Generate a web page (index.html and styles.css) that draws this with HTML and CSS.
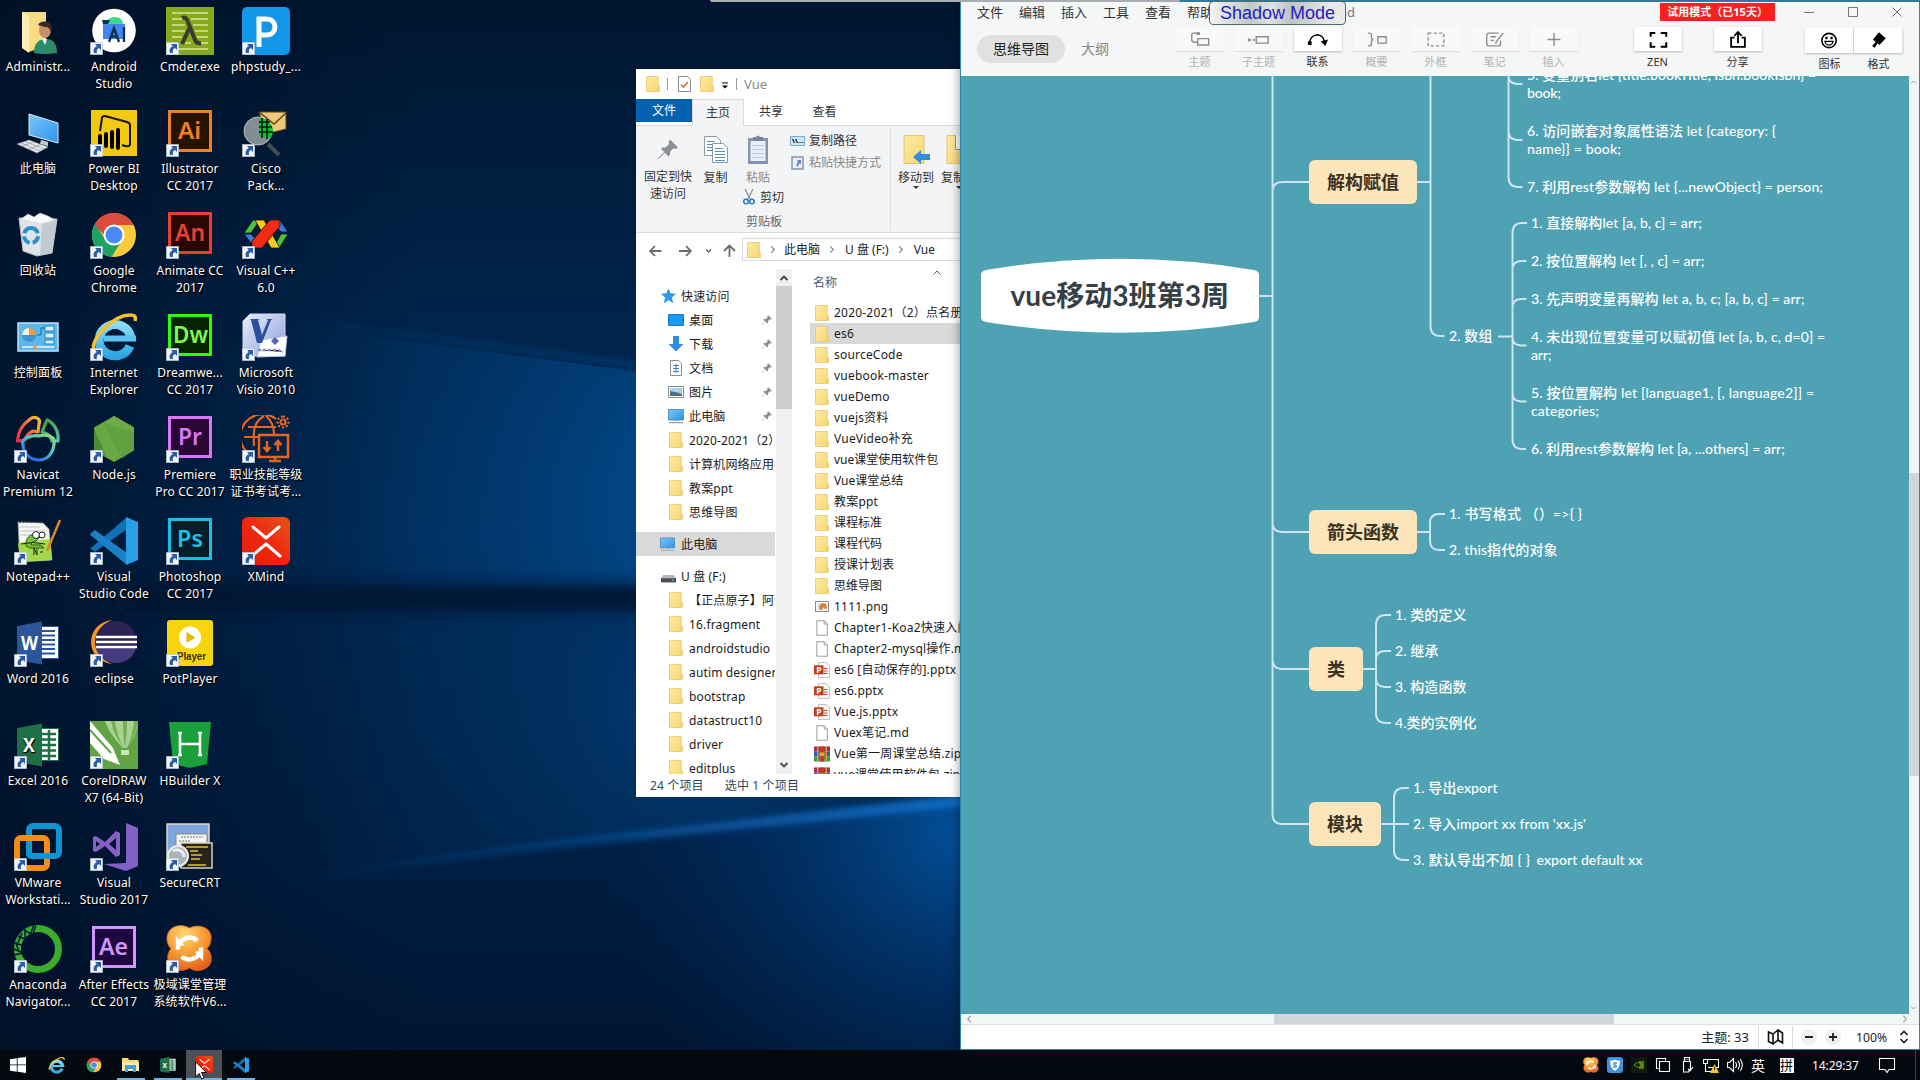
FILE: index.html
```
<!DOCTYPE html>
<html lang="zh-CN">
<head>
<meta charset="utf-8">
<title>桌面</title>
<link rel="stylesheet" href="styles.css">
</head>
<body>
<svg class="defs" width="0" height="0">
  <defs>
    <linearGradient id="gFolder" x1="0" y1="0" x2="1" y2="1"><stop offset="0" stop-color="#fdeaa0"/><stop offset="1" stop-color="#f8d775"/></linearGradient>
    <linearGradient id="gScreen" x1="0" y1="0" x2="1" y2="1"><stop offset="0" stop-color="#7cc8fb"/><stop offset="1" stop-color="#2a93e8"/></linearGradient>
    <linearGradient id="gXm" x1="1" y1="0" x2="0" y2="1"><stop offset="0" stop-color="#e0571b"/><stop offset=".5" stop-color="#f0270f"/><stop offset="1" stop-color="#e51d05"/></linearGradient>
    <radialGradient id="gOr" cx=".4" cy=".2" r=".9"><stop offset="0" stop-color="#ffd978"/><stop offset=".5" stop-color="#f79a32"/><stop offset="1" stop-color="#e2561a"/></radialGradient>
    <linearGradient id="gIe" x1="0" y1="0" x2="0" y2="1"><stop offset="0" stop-color="#8ddcf8"/><stop offset="1" stop-color="#29a7e6"/></linearGradient>
    <linearGradient id="gNavR" gradientUnits="userSpaceOnUse" x1="3" y1="24" x2="26" y2="6"><stop offset="0" stop-color="#ee2d4f"/><stop offset=".5" stop-color="#f4643a"/><stop offset="1" stop-color="#fbc02d"/></linearGradient>
    <linearGradient id="gNavG" gradientUnits="userSpaceOnUse" x1="32" y1="4" x2="44" y2="26"><stop offset="0" stop-color="#4c9a3e"/><stop offset="1" stop-color="#4cc4b4"/></linearGradient>
    <linearGradient id="gNav" gradientUnits="userSpaceOnUse" x1="38" y1="20" x2="22" y2="45"><stop offset="0" stop-color="#9fd36a"/><stop offset=".5" stop-color="#4fc3d0"/><stop offset="1" stop-color="#2f6fe0"/></linearGradient>
    <linearGradient id="gVisio" x1="0" y1="0" x2="1" y2="1"><stop offset="0" stop-color="#e9eefb"/><stop offset="1" stop-color="#8a9fd8"/></linearGradient>
  </defs>
  <symbol id="lnk" viewBox="0 0 13 13"><path fill="#f2f5fa" stroke="#aeb8c8" stroke-width=".6" d="M.3.3h12.4v12.4H.3z"/><path fill="#2b5ca8" d="M5 2h6v6L9 6.100C7 7 6.500 8.500 7 11H4C2.800 8 4 5.500 6.800 4z"/></symbol>
  <symbol id="folder" viewBox="0 0 14 16"><path fill="url(#gFolder)" stroke="#e6c25c" stroke-width=".7" d="M.5.5h11.800v9l1 1v5H.5z"/><path fill="#f3cf68" d="M11.600 10.500h1.800v5h-1.800z"/></symbol>
  <symbol id="pc" viewBox="0 0 16 16"><path fill="url(#gScreen)" stroke="#4a86b4" stroke-width=".8" d="M.5 1.500h15v10.500H.5z"/><path fill="#8fa6b8" d="M1 14h14v1.200H1zM6 12h4v1H6z"/></symbol>
  <symbol id="pin" viewBox="0 0 10 10"><path fill="#8b8f94" d="M6 0l4 4-1 .6L7.500 4.500 6 6.300v1.500l-.8.6L3.400 6.600.3 9.700 0 9.400l3.200-3.100L1.500 4.700l.7-.7 1.500 0 1.800-1.600L5.400 1z"/></symbol>
  <symbol id="doc" viewBox="0 0 14 17"><path fill="#fff" stroke="#8c8c8c" stroke-width=".9" d="M1.500.8h8l3.200 3.400v12H1.500z"/><path fill="none" stroke="#8c8c8c" stroke-width=".8" d="M9.300.8v3.500h3.500"/></symbol>
  <symbol id="ppt" viewBox="0 0 16 16"><path fill="#fff" stroke="#a9a9a9" stroke-width=".8" d="M4.500.6h7.500l3.400 3.200v11.600H4.500z"/><path fill="none" stroke="#c0452a" d="M9.500 6.500h4M9.500 9h4M9.500 11.500h4"/><path fill="#c43e1c" d="M0 3.300h9.500v9H0z"/><text x="2.200" y="10.800" font-size="8.500" font-weight="700" fill="#fff">P</text></symbol>
  <symbol id="zip" viewBox="0 0 16 16"><path fill="#a92e44" d="M0 .5h16v4.800H0z"/><path fill="#3a55b8" d="M0 5.300h16v5H0z"/><path fill="#3b9a44" d="M0 10.300h16v5.200H0z"/><path fill="#caa24c" d="M3 .5h1.500v15H3zM11.500.5H13v15h-1.500z"/><path fill="#c33" d="M6 .5h4v15H6z"/><path fill="#e9a23c" stroke="#7a4d1d" stroke-width=".7" d="M5 6h6v4.500H5z"/></symbol>
  <symbol id="ie" viewBox="0 0 48 48"><path fill="none" stroke="url(#gIe)" stroke-width="9" d="M40 33A16 15.500 0 1 1 41 25"/><path fill="#5cc4f3" d="M14 22.500h32v6H14z"/><path fill="none" stroke="#f5bf2b" stroke-width="3.600" d="M4 36C0 26 24 2 40 2c6 0 6 3 5 6"/></symbol>
  <symbol id="chrome" viewBox="0 0 48 48"><circle cx="24" cy="24" r="22" fill="#fccb3d"/><path fill="#db4c3f" d="M24 24L5 13A22 22 0 0 1 43 13H24z"/><path fill="#db4c3f" d="M4.500 14A22 22 0 0 1 43.500 14H24L14 24z"/><path fill="#1ea362" d="M5 13A22 22 0 0 0 21.500 46L31.500 30 15 28z"/><circle cx="24" cy="24" r="10.500" fill="#fff"/><circle cx="24" cy="24" r="8.500" fill="#4a8af4"/></symbol>
  <symbol id="vsc" viewBox="0 0 48 48"><path fill="#1070b3" d="M0 31l5 4L37 12V0L2 30z"/><path fill="#1b80c4" d="M0 17l5-4 32 23v12L1 18.500z"/><path fill="#27a0ea" d="M36 0l12 5v38l-12 5z"/></symbol>
  <symbol id="excel" viewBox="0 0 48 48"><path fill="#fff" stroke="#1d7044" d="M26 7.500h18.500v32H26z"/><path fill="none" stroke="#1d7044" stroke-width="2.500" d="M28 13h14M28 18.500h14M28 24h14M28 29.500h14M28 35h14M35 9v30"/><path fill="#1e7145" d="M3 7l25-4.500v43L3 41z"/><text x="9" y="31" font-size="20" font-weight="700" fill="#fff" textLength="12" lengthAdjust="spacingAndGlyphs">X</text></symbol>
  <symbol id="xm" viewBox="0 0 48 48"><rect width="48" height="48" rx="6" fill="url(#gXm)"/><path fill="none" stroke="#fff" stroke-width="3" stroke-linecap="round" stroke-linejoin="round" d="M11 10l13 11L37 10M10 39l14-12 14 12"/></symbol>
  <symbol id="clover" viewBox="0 0 48 48"><path fill="url(#gOr)" stroke="#c65a1d" stroke-width=".8" d="M24 3C34-2 48 3 46 15c0 4-2 7-4 9 7 7 5 17-1 20-6 4-13 3-17 0-6 4-14 3-19-2-5-6-4-13 0-18C0 20-1 9 5 4c6-5 14-4 19-1z"/><path fill="none" stroke="#fff" stroke-width="4.500" d="M12 25a12 12 0 0 1 20-9M36 23a12 12 0 0 1-20 9"/><path fill="#fff" d="M10 11v10h9zM38 37V27h-9z"/></symbol>
</svg>

<div class="desktop">
  <svg class="wall" viewBox="0 0 1920 1080" preserveAspectRatio="none">
    <defs>
      <linearGradient id="w1" x1="0" y1="0" x2="0" y2="1"><stop offset="0" stop-color="#001630"/><stop offset=".3" stop-color="#00244b"/><stop offset=".5" stop-color="#002852"/><stop offset=".8" stop-color="#001e42"/><stop offset="1" stop-color="#001430"/></linearGradient>
      <radialGradient id="w2" gradientUnits="userSpaceOnUse" cx="760" cy="500" r="560"><stop offset="0" stop-color="#0461b4" stop-opacity=".8"/><stop offset=".5" stop-color="#024584" stop-opacity=".5"/><stop offset="1" stop-color="#023060" stop-opacity="0"/></radialGradient>
      <radialGradient id="w6" gradientUnits="userSpaceOnUse" cx="700" cy="720" r="440"><stop offset="0" stop-color="#034a8c" stop-opacity=".6"/><stop offset="1" stop-color="#023060" stop-opacity="0"/></radialGradient>
      <linearGradient id="w3" gradientUnits="userSpaceOnUse" x1="220" y1="0" x2="960" y2="0"><stop offset="0" stop-color="#0a5cab" stop-opacity="0"/><stop offset=".5" stop-color="#0a5cab" stop-opacity=".6"/><stop offset="1" stop-color="#0b6bc4"/></linearGradient>
      <linearGradient id="w4" x1="0" y1="0" x2="1" y2="0"><stop offset="0" stop-color="#000f24" stop-opacity=".75"/><stop offset="1" stop-color="#000f24" stop-opacity="0"/></linearGradient>
      <radialGradient id="w5" gradientUnits="userSpaceOnUse" cx="960" cy="830" r="360"><stop offset="0" stop-color="#0458a8" stop-opacity=".85"/><stop offset=".5" stop-color="#023a78" stop-opacity=".5"/><stop offset="1" stop-color="#012a5c" stop-opacity="0"/></radialGradient>
      <filter id="bl" x="-5%" y="-50%" width="110%" height="200%"><feGaussianBlur stdDeviation="3"/></filter>
      <filter id="bl2" x="-5%" y="-100%" width="110%" height="300%"><feGaussianBlur stdDeviation="7"/></filter>
    </defs>
    <path fill="url(#w1)" d="M0 0h1920v1080H0z"/>
    <path fill="url(#w2)" d="M100 301L960 414V590H100z"/>
    <path fill="url(#w6)" d="M200 605H960V802L545 845 200 890z"/>
    <path fill="url(#w5)" d="M545 845L960 802v248H545z"/>
    <path fill="url(#w4)" d="M0 0h420v1080H0z"/>
    <path filter="url(#bl2)" fill="#001430" opacity=".9" d="M120 584h860v28H120z"/>
    <path filter="url(#bl)" stroke="url(#w3)" stroke-width="3" fill="none" d="M220 310L650 367"/>
    <path filter="url(#bl)" fill="url(#w3)" d="M220 889L545 843 965 794v12L545 849z"/>
  </svg>

  <div class="apps">
    <div class="app"><svg viewBox="0 0 48 48"><path fill="#f7dc83" d="M8 5h24v34l-17 6z"/><path fill="#fdeeb4" d="M8 5l7 5v36l-7-5z"/><path fill="#2e8b6a" d="M20 46c0-9 4-14 12-14s11 6 11 14q-12 2-23 0z"/><ellipse cx="31" cy="23" rx="6" ry="8" fill="#c98f68"/><path fill="#382a24" d="M24 18c2-5 13-5 14 3l-1 5c-1-5-3-6-6-6z"/><path fill="#fff" d="M28 32l3 6 2-6z"/></svg><span>Administr...</span></div>
    <div class="app"><svg viewBox="0 0 48 48"><path fill="url(#gScreen)" stroke="#dfe8f0" d="M15 5l29 9v20L15 26z"/><path fill="#c3ccd6" d="M27 31l7 2v4l-8-2z"/><path fill="#e4e8ec" stroke="#8b949e" stroke-width=".6" d="M3 35l12-4 19 7-11 6z"/><path stroke="#8b949e" stroke-width=".7" d="M7 34l19 8M11 32.500l19 7.500M8 37l12-4M15 40l12-4.500"/></svg><span>此电脑</span></div>
    <div class="app"><svg viewBox="0 0 48 48"><path fill="#dfe4e8" stroke="#b7bfc6" d="M5 7l38 1-5 34-15 3-14-5z"/><path fill="#c2cad1" d="M28 9l15-1-5 34-12 2z"/><path fill="#f7f9fa" stroke="#c8cfd4" stroke-width=".5" d="M7 8l7-5 6 3 6-4 8 3 7 4-14 4z"/><path fill="none" stroke="#2a8fcb" stroke-width="4" stroke-dasharray="9 3" d="M17 17a7 7.500 0 1 0 .1 0z"/></svg><span>回收站</span></div>
    <div class="app"><svg viewBox="0 0 48 48"><path fill="#5bb8e8" stroke="#bfe4f6" stroke-width="1.500" d="M4 10h40v28H4z"/><circle cx="15" cy="22" r="7" fill="#3d94cf"/><path fill="#f6f1e2" d="M15 22v-7a7 7 0 0 0-7 7z"/><path fill="#f29c33" d="M15 22v-7a7 7 0 0 1 7 7z"/><path fill="#d7eefb" stroke="#2783bd" d="M31 13h9v5h-9zM31 20h9v5h-9zM31 27h9v4h-9z"/><path stroke="#1668a5" fill="none" d="M31 15h-4v7h-4"/><path stroke="#eaf7ff" stroke-width="1.500" d="M8 34h32"/><circle cx="21" cy="34" r="2" fill="#f29c33"/></svg><span>控制面板</span></div>
    <div class="app"><svg viewBox="0 0 48 48"><g fill="none" stroke-width="3.200" stroke-linejoin="round"><path stroke="url(#gNavR)" d="M3.500 26C4 17 8 10 15 5c5-5 12-2 10 4l-1 8-5-1c-4 2-7 5-8 9z"/><path stroke="url(#gNavG)" d="M28 17l5-12c6 2 10 9 11 15v6h-6c-1-4-4-8-10-9z"/><path stroke="url(#gNav)" d="M9 30c-3-8 12-10 16-9 6-2 18 0 15 8-1 10-7 16-15 16S9 39 9 30z"/></g><use href="#lnk" y="35" width="13" height="13"/></svg><span>Navicat<br>Premium 12</span></div>
    <div class="app"><svg viewBox="0 0 48 48"><path fill="#f6f7f2" stroke="#999" stroke-width=".7" d="M4 5l25 1 6 6 3 31-32 2z"/><path fill="#a3d84a" d="M4 26l32-4 2 21-32 2z"/><path stroke="#333" stroke-width="1.500" stroke-dasharray="2 1.500" d="M5 5h23"/><path fill="none" stroke="#b7c2d0" d="M6 10h20M6 14h26M6 18h26"/><path fill="#78c33c" stroke="#31571c" d="M12 29c-1-8 4-12 10-12l4 3-4 4c-3 0-5 2-5 4l10 0 3 3H16z"/><circle cx="22" cy="18" r="3.500" fill="#fff" stroke="#222"/><circle cx="28" cy="18" r="3" fill="#fff" stroke="#222"/><path fill="none" stroke="#222" d="M20 38v-7l3 7v-6M26 35h3M7 27q12-3 24 0"/><path stroke="#d58a2a" stroke-width="2.500" d="M46 3L33 34"/><use href="#lnk" y="35" width="13" height="13"/></svg><span>Notepad++</span></div>
    <div class="app"><svg viewBox="0 0 48 48"><path fill="#fff" stroke="#2b579a" d="M26 7.500h18.500v32H26z"/><path stroke="#2b579a" stroke-width="2" d="M28 12h13M28 16.500h13M28 21h13M28 25.500h13M28 30h13M28 34.500h13"/><path fill="#2b579a" d="M3 7l25-4.500v43L3 41z"/><text x="7" y="31" font-size="20" font-weight="700" fill="#fff" textLength="17" lengthAdjust="spacingAndGlyphs">W</text><use href="#lnk" y="35" width="13" height="13"/></svg><span>Word 2016</span></div>
    <div class="app"><svg viewBox="0 0 48 48"><use href="#excel" width="48" height="48"/><use href="#lnk" y="35" width="13" height="13"/></svg><span>Excel 2016</span></div>
    <div class="app"><svg viewBox="0 0 48 48"><rect x="15" y="3" width="30" height="30" rx="4" fill="none" stroke="#1094d2" stroke-width="6"/><rect x="3" y="15" width="30" height="30" rx="4" fill="none" stroke="#f58d13" stroke-width="6"/><path fill="none" stroke="#1094d2" stroke-width="6" d="M15 18.200v11.800q0 3 3 3h18"/><use href="#lnk" y="35" width="13" height="13"/></svg><span>VMware<br>Workstati...</span></div>
    <div class="app"><svg viewBox="0 0 48 48"><circle cx="24" cy="24" r="20.500" fill="none" stroke="#3aae2a" stroke-width="7"/><path stroke="#021a38" stroke-width="1.500" d="M0 30l9-2M0 24l9 4M1 18l9 3M3 20l5-12M4 11l9 4M11 15l0-11M10 5l9 5M16 10l4-10M5 27l-3-9M22 1l-3 7"/><use href="#lnk" y="35" width="13" height="13"/></svg><span>Anaconda<br>Navigator...</span></div>

    <div class="app"><svg viewBox="0 0 48 48"><circle cx="24" cy="23.500" r="21.800" fill="#fff"/><path fill="#3ddc84" d="M16 17c0-4 4-7 9-7s8 3 8 7z"/><path fill="#123048" d="M12 13h8l-2 4h-5z"/><path fill="#4285f4" d="M13 17h22v15H13z"/><path stroke="#123048" stroke-width="2.300" fill="none" d="M19 35l5-14 5 14M21 29.500h6M34 20v15"/><use href="#lnk" y="35" width="13" height="13"/></svg><span>Android<br>Studio</span></div>
    <div class="app"><svg viewBox="0 0 48 48"><path fill="#f2c811" d="M1 1h46v46H1z"/><path fill="none" stroke="#1a1503" stroke-width="2" d="M10 22l2-13q0-2 3-2l22 6q3 1 3 3v19q0 4-8 1"/><path stroke="#000" stroke-width="4" stroke-linecap="round" d="M10 27v8M16 25v12M22 23v15M28 21v18"/><use href="#lnk" y="35" width="13" height="13"/></svg><span>Power BI<br>Desktop</span></div>
    <div class="app"><svg viewBox="0 0 48 48"><use href="#chrome" width="48" height="48"/><use href="#lnk" y="35" width="13" height="13"/></svg><span>Google<br>Chrome</span></div>
    <div class="app"><svg viewBox="0 0 48 48"><use href="#ie" width="48" height="48"/><use href="#lnk" y="35" width="13" height="13"/></svg><span>Internet<br>Explorer</span></div>
    <div class="app"><svg viewBox="0 0 48 48"><path fill="#6aa843" d="M24 1l20 11.500v23L24 47 4 35.500v-23z"/><path fill="#83bd52" d="M24 1l20 11.500v5L15 8z"/><path fill="#4f8a39" d="M4 13l12 28L4 35.500z"/><path fill="#5a9a3e" d="M13 8l19 36 12-10V12.500L24 1z" opacity=".5"/><use href="#lnk" y="35" width="13" height="13"/></svg><span>Node.js</span></div>
    <div class="app"><svg viewBox="0 0 48 48"><use href="#vsc" width="48" height="48"/><use href="#lnk" y="35" width="13" height="13"/></svg><span>Visual<br>Studio Code</span></div>
    <div class="app"><svg viewBox="0 0 48 48"><path fill="#f7941e" d="M22 1C-6 4-6 42 22 45 0 36 0 10 22 1z"/><circle cx="26" cy="23" r="21" fill="#2c2255"/><path fill="#463a80" d="M6 29h40q-4 14-20 15-15-1-20-15z"/><path stroke="#fff" stroke-width="2.500" d="M6 18h41M6 23h41M6 28h41"/><use href="#lnk" y="35" width="13" height="13"/></svg><span>eclipse</span></div>
    <div class="app"><svg viewBox="0 0 48 48"><path fill="#5fa544" d="M0 0h48v48H0z"/><path fill="#a9d192" d="M15 0h33q-1 14-11 27h-4Q19 13 15 0z"/><path fill="#6fb053" d="M21 0h4q2 16 9 27Q23 13 21 0zM33 0h4q0 14-2 27-2-10-2-27zM44 0h4q-3 16-11 27 6-14 7-27z"/><path fill="#cbe5bd" d="M31 29h8v5h-8z"/><path fill="#fff" d="M0 0l23 27 7 17-16-6L0 22z"/><path stroke="#5fa544" stroke-width="2" d="M0 9l21 23"/><use href="#lnk" y="35" width="13" height="13"/></svg><span>CorelDRAW<br>X7 (64-Bit)</span></div>
    <div class="app"><svg viewBox="0 0 48 48"><path fill="#8661c5" d="M36 0l12 5v38l-12 5-22-7 22-1z"/><path fill="#8661c5" fill-rule="evenodd" d="M3 14l3-1 9 6 11-11 4 2v22l-4 2-11-11-9 6-3-1zm3 4v6l4-3zm20-3l-7 6 7 6z"/><use href="#lnk" y="35" width="13" height="13"/></svg><span>Visual<br>Studio 2017</span></div>
    <div class="app"><svg viewBox="0 0 48 48"><path fill="#1f0740" stroke="#cf96fd" stroke-width="3" d="M3.500 2.500h41v39h-41z"/><text class="ad" x="9" y="30" fill="#cf96fd" textLength="29" lengthAdjust="spacingAndGlyphs">Ae</text><use href="#lnk" y="35" width="13" height="13"/></svg><span>After Effects<br>CC 2017</span></div>

    <div class="app"><svg viewBox="0 0 48 48"><path fill="#88a91c" d="M0 0h48v48H0z"/><path stroke="#d6e5a0" stroke-width="1.600" d="M6 6h36M6 12h10M25 12h17M6 18h13M27 18h15M6 24h13M29 24h13M6 30h10M31 30h11M19 36h6M33 36h9M12 42h30"/><path fill="none" stroke="#3b3b2d" stroke-width="4" d="M16 11q4-2 6 4l7 18q2 4 6 3M24 20l-8 17"/><use href="#lnk" y="35" width="13" height="13"/></svg><span>Cmder.exe</span></div>
    <div class="app"><svg viewBox="0 0 48 48"><path fill="#261300" stroke="#f28020" stroke-width="3" d="M3.500 2.500h41v39h-41z"/><text class="ad" x="12" y="30" fill="#f28020" textLength="23" lengthAdjust="spacingAndGlyphs">Ai</text><use href="#lnk" y="35" width="13" height="13"/></svg><span>Illustrator<br>CC 2017</span></div>
    <div class="app"><svg viewBox="0 0 48 48"><path fill="#2a0604" stroke="#e8402f" stroke-width="3" d="M3.500 2.500h41v39h-41z"/><text class="ad" x="9" y="30" fill="#e8402f" textLength="30" lengthAdjust="spacingAndGlyphs">An</text><use href="#lnk" y="35" width="13" height="13"/></svg><span>Animate CC<br>2017</span></div>
    <div class="app"><svg viewBox="0 0 48 48"><path fill="#072401" stroke="#35fa00" stroke-width="3" d="M3.500 2.500h41v39h-41z"/><text class="ad" x="7" y="30" fill="#7dfa4c" textLength="35" lengthAdjust="spacingAndGlyphs">Dw</text><use href="#lnk" y="35" width="13" height="13"/></svg><span>Dreamwe...<br>CC 2017</span></div>
    <div class="app"><svg viewBox="0 0 48 48"><path fill="#2a0634" stroke="#d678f5" stroke-width="3" d="M3.500 2.500h41v39h-41z"/><text class="ad" x="12" y="30" fill="#d678f5" textLength="24" lengthAdjust="spacingAndGlyphs">Pr</text><use href="#lnk" y="35" width="13" height="13"/></svg><span>Premiere<br>Pro CC 2017</span></div>
    <div class="app"><svg viewBox="0 0 48 48"><path fill="#021e26" stroke="#18bfe8" stroke-width="3" d="M3.500 2.500h41v39h-41z"/><text class="ad" x="11" y="30" fill="#18bfe8" textLength="26" lengthAdjust="spacingAndGlyphs">Ps</text><use href="#lnk" y="35" width="13" height="13"/></svg><span>Photoshop<br>CC 2017</span></div>
    <div class="app"><svg viewBox="0 0 48 48"><rect x="1" y="1" width="46" height="46" rx="3" fill="#f6d50f"/><circle cx="24" cy="18.500" r="11" fill="#fff"/><path fill="#e8b800" d="M20.500 13v11l9-5.500z"/><text class="pp" x="11" y="41" fill="#3b2d08" textLength="29" lengthAdjust="spacingAndGlyphs">Player</text><use href="#lnk" y="35" width="13" height="13"/></svg><span>PotPlayer</span></div>
    <div class="app"><svg viewBox="0 0 48 48"><path fill="#1aa03a" d="M3 1h42l-4 42-17 4-17-4z"/><path fill="none" stroke="#fff" stroke-width="2.500" d="M14 12v22M34 12v22M14 23h20M12 12h4M32 12h4M12 34h4M32 34h4"/><use href="#lnk" y="35" width="13" height="13"/></svg><span>HBuilder X</span></div>
    <div class="app"><svg viewBox="0 0 48 48"><path fill="#7fa6de" stroke="#ddd6c4" stroke-width="1.500" d="M1 1h42v42H1z"/><path fill="#f4f4f0" stroke="#888" d="M10 11h31v12H10z"/><path stroke="#777" stroke-dasharray="2 1" d="M15 14h22M13 18h12"/><path fill="#25231c" stroke="#d8d1bd" stroke-width="1.500" d="M15 20h31v25H15z"/><path stroke="#e2c326" stroke-width="1.500" d="M20 24h22M24 28h8M25 32h11M25 36h9M22 42h18"/><circle cx="12" cy="33" r="10" fill="#aab3ba" stroke="#eee" stroke-width="2"/><path fill="none" stroke="#eee" stroke-width="3" d="M7 28a7 7 0 0 1 11 6"/><use href="#lnk" y="35" width="13" height="13"/></svg><span>SecureCRT</span></div>
    <div class="app"><svg viewBox="0 0 48 48"><use href="#clover" width="47" height="47"/><use href="#lnk" y="35" width="13" height="13"/></svg><span>极域课堂管理<br>系统软件V6...</span></div>

    <div class="app"><svg viewBox="0 0 48 48"><rect width="48" height="48" rx="5" fill="#1296e8"/><path fill="none" stroke="#fff" stroke-width="5" d="M17 40V12h7c12 0 12 16 0 16h-7"/><use href="#lnk" y="35" width="13" height="13"/></svg><span>phpstudy_...</span></div>
    <div class="app"><svg viewBox="0 0 48 48"><path fill="#edc77a" stroke="#5c4516" d="M17 3h27v17l-20 5z"/><path fill="none" stroke="#5c4516" stroke-width="1.500" d="M17 3l15 12L44 4"/><circle cx="16" cy="22" r="14" fill="#848c94" stroke="#b5bcc2"/><path fill="#0cc03a" d="M17 9c8 0 14 6 14 13 0 3-1 5-3 7l-11-2z"/><path stroke="#031c08" stroke-width="1.600" d="M17 13h11M17 18h13M17 23h14M20 9v20M25 10v20"/><path stroke="#444c52" stroke-width="4" d="M26 35l11 11"/><use href="#lnk" y="35" width="13" height="13"/></svg><span>Cisco<br>Pack...</span></div>
    <div class="app"><svg viewBox="0 0 48 48"><g stroke="#111" stroke-width=".8"><path fill="#4cc13a" d="M2 22L11 9h7l-9 13z"/><path fill="#2f7de0" d="M2 23h7l8 9-4 5z"/><path fill="#2f7de0" d="M35 9h3l8 12h-7l-6-7z"/><path fill="#4cc13a" d="M39 23h7l-8 13h-6z"/><path fill="#f7c81f" d="M13 9h9l16 28h-9z"/><path fill="#f22a16" d="M28 9h10v6L20 37H10v-7z"/></g><use href="#lnk" y="35" width="13" height="13"/></svg><span>Visual C++<br>6.0</span></div>
    <div class="app"><svg viewBox="0 0 48 48"><path fill="url(#gVisio)" stroke="#cfd8f2" d="M8 1h35v42H1V8z"/><path fill="#fff" stroke="#b9c4e6" d="M19 27l26-4-2 20-28 1z"/><path fill="#2d4fa0" d="M8 6h10l-2 1 4 15 6-15-2-1h7l-2 1-9 23h-5L9 7z"/><path fill="#5663b8" d="M33 24l4 4-4 4-4-4z"/><path stroke="#8089cc" stroke-width="2.500" stroke-dasharray="3 2" d="M16 37h20l5 2"/><use href="#lnk" y="35" width="13" height="13"/></svg><span>Microsoft<br>Visio 2010</span></div>
    <div class="app"><svg viewBox="0 0 48 48"><g fill="none" stroke="#e8641c" stroke-width="2.200"><path d="M5 37A22 22 0 0 1 34 4M16 22H2M6 12h28M22 1c-10 6-11 14-10 30M24 1c6 5 8 12 8 18"/><path d="M17 20h29v22H17zM27 46h12M33 42v4M25 26v10M21.500 32l3.500 4 3.500-4M36 36V26M32.500 30l3.500-4 3.500 4" stroke-width="2.500"/><circle cx="41" cy="7" r="2.500"/><path stroke-dasharray="2 2" d="M41 1.500a5.500 5.500 0 1 1-.1 0"/></g><use href="#lnk" y="35" width="13" height="13"/></svg><span>职业技能等级<br>证书考试考...</span></div>
    <div class="app"><svg viewBox="0 0 48 48"><use href="#xm" width="48" height="48"/><use href="#lnk" y="35" width="13" height="13"/></svg><span>XMind</span></div>
  </div>

  <section class="explorer">
    <header class="ex-title"><svg width="14" height="16"><use href="#folder" width="14" height="16"/></svg><i></i><svg class="chk" viewBox="0 0 13 16" width="13" height="16"><path fill="#fff" stroke="#8a8a8a" d="M.5.5h9l3 3v12H.5z"/><path fill="none" stroke="#d9722e" stroke-width="1.600" d="M3 8.500l2.500 2.500L10 6"/></svg><svg width="14" height="16"><use href="#folder" width="14" height="16"/></svg><svg class="dd" viewBox="0 0 8 7" width="8" height="7"><path d="M1 .5h6v1H1zM1 3.500h6l-3 3z"/></svg><i></i><span>Vue</span></header>
    <nav class="ex-tabs"><b>文件</b><b class="on">主页</b><b>共享</b><b>查看</b></nav>
    <div class="ribbon">
      <div class="rb rb1"><svg viewBox="0 0 10 10" width="20" height="21"><use href="#pin" width="10" height="10"/></svg><span>固定到快<br>速访问</span></div>
      <div class="rb rb2"><svg viewBox="0 0 26 29" width="26" height="29"><g fill="#fff" stroke="#8b98a6"><path d="M1.500 1.500h12l4 4v15h-16z"/><path d="M9.500 8.500h11l4 4v15h-15z"/></g><path stroke="#4a93c9" d="M4 6.500h8M4 9.500h5M4 12.500h5M4 15.500h5M12 13.500h8M12 16.500h10M12 19.500h10M12 22.500h10M12 25.500h10"/></svg><span>复制</span></div>
      <div class="rb rb3"><svg viewBox="0 0 22 29" width="22" height="29"><path fill="#8593b0" d="M1 3h20v26H1z"/><path fill="#e9eff9" d="M3.500 6h15v20h-15z"/><path fill="#75839c" d="M6 2h3q2-3 4 0h3v4H6z"/><path stroke="#b8c8e0" d="M5 10.500h12M5 14.500h12M5 18.500h12M5 22.500h12"/></svg><span class="dim">粘贴</span><div class="cut"><svg viewBox="0 0 12 16" width="12" height="16"><path stroke="#8c9aa8" stroke-width="1.500" d="M2 0l5 10M10 0L5 10"/><circle cx="3" cy="12.500" r="2.300" fill="none" stroke="#2a7ab9" stroke-width="1.500"/><circle cx="9" cy="12.500" r="2.300" fill="none" stroke="#2a7ab9" stroke-width="1.500"/></svg>剪切</div><em>剪贴板</em></div>
      <div class="rb4"><p><svg viewBox="0 0 15 10" width="15" height="10"><path fill="#cde6f8" stroke="#7aa9cc" d="M.5.5h14v9H.5z"/><path stroke="#222" stroke-width="1.200" d="M2.500 3l2 4M5.500 3l2 4M8.500 6.500h1M10.500 6.500h1M12.200 6.500h1"/></svg>复制路径</p><p class="dim"><svg viewBox="0 0 13 15" width="15" height="15"><path fill="#e8eef8" stroke="#8796ad" stroke-width="1.500" d="M1 2h11v12H1z"/><path fill="#6680b8" d="M6 5h4v4L8.700 8 7 11H5l2-4.500z"/></svg>粘贴快捷方式</p></div>
      <div class="rb rb5"><svg viewBox="0 0 27 29" width="27" height="29"><path fill="url(#gFolder)" stroke="#e8c668" d="M1 .5h20v28H1z"/><path fill="#2f8fd8" d="M10 22l8-7v4h9v6h-9v4z"/></svg><span>移动到</span><s></s></div>
      <div class="rb rb6"><svg viewBox="0 0 27 29" width="27" height="29"><path fill="url(#gFolder)" stroke="#e8c668" d="M1 .5h20v28H1z"/><path fill="#fff" stroke="#8b98a6" d="M9.500-.5h12v15h-12z"/></svg><span>复制到</span><s></s></div>
    </div>
    <div class="addr">
      <svg viewBox="0 0 90 16" width="90" height="16"><g fill="none" stroke="#6b6b6b" stroke-width="1.800"><path d="M13.500 8H2.500M7 3L2.200 8 7 13M31 8h11M38 3l4.800 5-4.800 5M81.500 14V2.500M76 8l5.500-5.500L87 8"/><path stroke-width="1.500" d="M58 6.500l2.500 2.500L63 6.500"/></g></svg>
      <div class="path"><svg width="14" height="16"><use href="#folder" width="14" height="16"/></svg><u></u><span>此电脑</span><u></u><span>U 盘 (F:)</span><u></u><span>Vue</span></div>
    </div>
    <div class="ex-body">
      <div class="tree">
        <p class="l0"><svg viewBox="0 0 14 14"><path fill="#2a9be6" d="M7 0l2 4.500 5 .5-3.800 3.300L11.400 14 7 10.800 2.600 14l1.200-5.700L0 5l5-.5z"/></svg>快速访问</p>
        <p><svg viewBox="0 0 16 16"><path fill="#169cf5" stroke="#0d78c8" d="M.5 2.500h15v11H.5z"/></svg>桌面<svg class="pn"><use href="#pin"/></svg></p>
        <p><svg viewBox="0 0 16 16"><path fill="#2f8ee2" d="M5 0h6v8h4.500L8 15.500.5 8H5z"/></svg>下载<svg class="pn"><use href="#pin"/></svg></p>
        <p><svg viewBox="0 0 16 16"><path fill="#fff" stroke="#8b8b8b" d="M2.500.5h8l3 3v12h-11z"/><path stroke="#3a85c0" d="M5 5.500h6M5 8.500h6M5 11.500h6M8 4v9"/></svg>文档<svg class="pn"><use href="#pin"/></svg></p>
        <p><svg viewBox="0 0 16 16"><path fill="#fff" stroke="#8b8b8b" d="M.5 2.500h15v11H.5z"/><path fill="#a9d2ee" d="M2 4h12v8H2z"/><path fill="#4e6f80" d="M2 7q6 1 12 3v2H2z"/></svg>图片<svg class="pn"><use href="#pin"/></svg></p>
        <p><svg viewBox="0 0 16 16"><use href="#pc"/></svg>此电脑<svg class="pn"><use href="#pin"/></svg></p>
        <p><svg><use href="#folder"/></svg>2020-2021（2）</p>
        <p><svg><use href="#folder"/></svg>计算机网络应用技术</p>
        <p><svg><use href="#folder"/></svg>教案ppt</p>
        <p><svg><use href="#folder"/></svg>思维导图</p>
        <p class="l0 root"><svg viewBox="0 0 16 16"><use href="#pc"/></svg>此电脑</p>
        <p class="l0"><svg viewBox="0 0 14 14"><path fill="#b4b8bb" d="M2 6h10l2 3H0z"/><path fill="#4a4e52" d="M0 9h14v4H0z"/><path fill="#6fe08a" d="M10 10.500h2v1h-2z"/></svg>U 盘 (F:)</p>
        <p><svg><use href="#folder"/></svg>【正点原子】阿尔法</p>
        <p><svg><use href="#folder"/></svg>16.fragment</p>
        <p><svg><use href="#folder"/></svg>androidstudio</p>
        <p><svg><use href="#folder"/></svg>autim designer</p>
        <p><svg><use href="#folder"/></svg>bootstrap</p>
        <p><svg><use href="#folder"/></svg>datastruct10</p>
        <p><svg><use href="#folder"/></svg>driver</p>
        <p><svg><use href="#folder"/></svg>editplus</p>
      </div>
      <div class="vbar"><svg viewBox="0 0 16 17"><path d="M4.500 11L8 7.500l3.500 3.500"/></svg><div></div><svg class="dn" viewBox="0 0 16 17"><path d="M4.500 6L8 9.500 11.500 6"/></svg></div>
      <div class="files">
        <h4>名称<svg viewBox="0 0 8 5" width="8" height="5"><path fill="none" stroke="#666" d="M.5 4.500L4 1l3.500 3.500"/></svg></h4>
        <p><svg><use href="#folder"/></svg>2020-2021（2）点名册</p>
        <p class="sel"><svg><use href="#folder"/></svg>es6</p>
        <p><svg><use href="#folder"/></svg>sourceCode</p>
        <p><svg><use href="#folder"/></svg>vuebook-master</p>
        <p><svg><use href="#folder"/></svg>vueDemo</p>
        <p><svg><use href="#folder"/></svg>vuejs资料</p>
        <p><svg><use href="#folder"/></svg>VueVideo补充</p>
        <p class="cj"><svg><use href="#folder"/></svg>vue课堂使用软件包</p>
        <p class="cj"><svg><use href="#folder"/></svg>Vue课堂总结</p>
        <p><svg><use href="#folder"/></svg>教案ppt</p>
        <p class="cj"><svg><use href="#folder"/></svg>课程标准</p>
        <p class="cj"><svg><use href="#folder"/></svg>课程代码</p>
        <p class="cj"><svg><use href="#folder"/></svg>授课计划表</p>
        <p class="cj"><svg><use href="#folder"/></svg>思维导图</p>
        <p><svg viewBox="0 0 16 16"><path fill="#fff" stroke="#888" d="M1.500 2.500h13v10h-13z"/><path fill="#dce9f2" d="M3 4h10v7H3z"/><path fill="#e07b2c" d="M5 7l3-3 4 1 1 4-2 1-2-2-1 3H6z"/></svg>1111.png</p>
        <p><svg><use href="#doc"/></svg>Chapter1-Koa2快速入门</p>
        <p><svg><use href="#doc"/></svg>Chapter2-mysql操作.md</p>
        <p><svg><use href="#ppt"/></svg>es6 [自动保存的].pptx</p>
        <p><svg><use href="#ppt"/></svg>es6.pptx</p>
        <p><svg><use href="#ppt"/></svg>Vue.js.pptx</p>
        <p><svg><use href="#doc"/></svg>Vuex笔记.md</p>
        <p><svg><use href="#zip"/></svg>Vue第一周课堂总结.zip</p>
        <p><svg><use href="#zip"/></svg>vue课堂使用软件包.zip</p>
      </div>
    </div>
    <footer class="ex-foot"><span>24 个项目</span><span>选中 1 个项目</span></footer>
  </section>

  <section class="xmind">
    <header class="xm-menu">
      <span>文件</span><span>编辑</span><span>插入</span><span>工具</span><span>查看</span><span>帮助</span>
      <span class="xt">XMind</span>
      <b class="trial">试用模式（已15天）</b>
      <svg viewBox="0 0 100 12" width="100" height="12"><path fill="none" stroke="#777" d="M1 6.500h10M45.500 1.500h9v9h-9zM89.500 1.500l9 9M98.500 1.500l-9 9"/></svg>
    </header>
    <div class="xm-bar">
      <div class="pills"><b class="on">思维导图</b><b>大纲</b></div>
      <div class="tools">
        <div class="tl off"><i><svg viewBox="0 0 24 20"><path d="M8 3H5q-2 0-2 2v5q0 3 3 3h3"/><path d="M9.500 9h12v7h-12z"/><path fill="#8c8c8c" stroke="none" d="M8 2h4v3H8z"/></svg></i>主题</div>
        <div class="tl off"><i><svg viewBox="0 0 24 20"><path d="M9 7h13v7H9zM5 10.500h3"/><path fill="#8c8c8c" stroke="none" d="M0 9h3v3H0z"/></svg></i>子主题</div>
        <div class="tl"><i><svg viewBox="0 0 24 20"><path d="M3 13C4 3 17 2 19 12"/><path fill="#000" stroke="none" d="M1 12h4v4H1zM15 12l8-2-3 7z"/></svg></i>联系</div>
        <div class="tl off"><i><svg viewBox="0 0 24 20"><path d="M2 3h2q2 0 2 2v3q0 2 2 2-2 0-2 2v3q0 2-2 2H2M13 7h9v7h-9z"/></svg></i>概要</div>
        <div class="tl off"><i><svg viewBox="0 0 24 20"><path stroke-dasharray="3.500 2.500" d="M3.500 3h17v14h-17z"/></svg></i>外框</div>
        <div class="tl off"><i><svg viewBox="0 0 24 20"><path d="M16 3H5q-2 0-2 2v10q0 2 2 2h11q2 0 2-2v-4M7 7h6M7 11h4M21 3l-8 10v2"/></svg></i>笔记</div>
        <div class="tl off"><i><svg viewBox="0 0 24 20"><path d="M12 3v14M5 10h14"/></svg></i>插入</div>
      </div>
      <div class="tl zen"><i><svg viewBox="0 0 24 20"><path d="M4 7V3h5M15 3h6v4M21 13v5h-6M9 18H4v-5" stroke-width="2.200"/></svg></i>ZEN</div>
      <div class="tl share"><i><svg viewBox="0 0 24 20"><path d="M8 8H4.500v10h15V8H16M12 14V2.500M8 6l4-4 4 4" stroke-width="2"/></svg></i>分享</div>
      <div class="pair">
        <div class="tl"><i><svg viewBox="0 0 24 20"><circle cx="12" cy="10" r="7.800"/><path fill="#000" stroke="none" d="M8 6h2.500v2.500H8zM13.500 6H16v2.500h-2.500z"/><path d="M7.500 11h9q-1 4-4.500 4t-4.500-4z" stroke-width="1.300"/></svg></i>图标</div>
        <div class="tl"><i><svg viewBox="0 0 24 20"><path fill="#000" stroke="none" d="M13 1l7.500 6.500-7 7.500-2-2-3 5-3-2 4-4.500-3-2.500z"/></svg></i>格式</div>
      </div>
    </div>
    <div class="xm-body">
      <svg class="map" viewBox="961 76 948 938" width="948" height="938">
        <g class="ln">
          <path d="M1259 296h13M1272.500 76v738q0 10 10 10h27M1272.500 192q0-10 10-10h27M1272.500 522q0 10 10 10h27M1272.500 659q0 10 10 10h27"/>
          <path d="M1417 182h13M1430.500 76v250q0 10 10 10h4"/>
          <path d="M1508.500 76v101q0 10 10 10h4M1508.500 76q0 8 10 8h4M1508.500 131q0 9 10 9h4"/>
          <path d="M1498 336.500h14M1527 223h-5q-9.500 0-9.500 10v206q0 10 9.500 10h4M1512.500 270q0-9 9-9h5M1512.500 308q0-9 9-9h5M1512.500 337q0 8.500 9 8.500h5M1512.500 393q0 8.500 9 8.500h5"/>
          <path d="M1417 532h13M1445 514h-6q-9 0-9 9v18q0 9 9 9h6"/>
          <path d="M1363 669h13M1391 615h-5q-10 0-10 10v88q0 10 10 10h5M1376 660q0-9 9-9h6M1376 678q0 9 9 9h6"/>
          <path d="M1381 824h28M1409 788h-5q-10 0-10 10v52q0 10 10 10h5"/>
        </g>
        <path fill="#fff" d="M986 270Q1120 247.500 1254 270q5 1 5 5v42q0 4-5 5Q1120 343.500 986 322q-5-1-5-5v-42q0-4 5-5z"/>
        <text class="rt" x="1010.500" y="306" textLength="218.500" lengthAdjust="spacingAndGlyphs">vue移动3班第3周</text>
        <g fill="#fce5bb"><rect x="1309" y="160" width="108" height="44" rx="6"/><rect x="1309" y="510" width="108" height="44" rx="6"/><rect x="1309" y="647" width="54" height="44" rx="6"/><rect x="1309" y="802" width="72" height="44" rx="6"/></g>
        <g class="nd"><text x="1327" y="188.500">解构赋值</text><text x="1327" y="538.500">箭头函数</text><text x="1327" y="675.500">类</text><text x="1327" y="830.500">模块</text></g>
        <g class="lf">
          <text x="1527" y="79.500" textLength="289">5. 变量别名let {title.bookTitle, isbn.bookIsbn} =</text><text x="1527" y="97.500" textLength="34">book;</text>
          <text x="1527" y="135.500" textLength="249">6. 访问嵌套对象属性语法 let {category: {</text><text x="1527" y="153.500" textLength="94">name}} = book;</text>
          <text x="1527" y="191.500" textLength="296">7. 利用rest参数解构 let {...newObject} = person;</text>
          <text x="1531" y="227.500" textLength="171">1. 直接解构let [a, b, c] = arr;</text>
          <text x="1531" y="265.500" textLength="173.500">2. 按位置解构 let [, , c] = arr;</text>
          <text x="1531" y="303.500" textLength="273.500">3. 先声明变量再解构 let a, b, c; [a, b, c] = arr;</text>
          <text x="1531" y="341.500" textLength="294">4. 未出现位置变量可以赋初值 let [a, b, c, d=0] =</text><text x="1531" y="359.500" textLength="20.500">arr;</text>
          <text x="1531" y="397.500" textLength="283">5. 按位置解构 let [language1, [, language2]] =</text><text x="1531" y="415.500" textLength="68">categories;</text>
          <text x="1531" y="453.500" textLength="254">6. 利用rest参数解构 let [a, ...others] = arr;</text>
          <text x="1449" y="341" textLength="43.500">2. 数组</text>
          <text x="1449" y="518.500" textLength="133">1. 书写格式 （）=&gt;{ }</text><text x="1449" y="554.500" textLength="108.500">2. this指代的对象</text>
          <text x="1395" y="619.500" textLength="71.500">1. 类的定义</text><text x="1395" y="655.500" textLength="43.500">2. 继承</text><text x="1395" y="691.500" textLength="71.500">3. 构造函数</text><text x="1395" y="727.500" textLength="81.500">4.类的实例化</text>
          <text x="1413" y="792.500" textLength="84.500">1. 导出export</text><text x="1413" y="828.500" textLength="173">2. 导入import xx from 'xx.js'</text><text x="1413" y="864.500" textLength="117">3. 默认导出不加 { }</text><text x="1536.500" y="864.500" textLength="106">export default xx</text>
        </g>
      </svg>
      <div class="xv"><svg viewBox="0 0 9 12"><path d="M2 7.500L4.500 5 7 7.500"/></svg><div></div><svg class="dn" viewBox="0 0 9 12"><path d="M2 4.500L4.500 7 7 4.500"/></svg></div>
    </div>
    <div class="xh"><svg viewBox="0 0 8 10"><path d="M5 2L2.500 5 5 8"/></svg><div></div><svg class="rg" viewBox="0 0 8 10"><path d="M3 2l2.500 3L3 8"/></svg></div>
    <footer class="xm-foot">
      <span>主题: 33</span>
      <i class="mp"><svg viewBox="0 0 17 17" width="17" height="17"><path fill="none" stroke="#111" stroke-width="1.600" d="M1.500 3l4.500 2v10l-4.500-2.500zM6 5l5-4v10l-5 4M11 1l4.500 3v10L11 11"/></svg></i>
      <svg viewBox="0 0 110 18" width="110" height="18"><circle cx="16" cy="9" r="8" fill="#efefef"/><circle cx="40" cy="9" r="8" fill="#efefef"/><path stroke="#222" stroke-width="1.800" d="M12 9h8M36 9h8M40 5v8"/><text x="63" y="13.500" font-size="13" fill="#222" textLength="31" lengthAdjust="spacingAndGlyphs">100%</text></svg>
      <svg viewBox="0 0 10 14" width="10" height="14"><path fill="none" stroke="#222" stroke-width="1.600" d="M1.500 5L5 1.500 8.500 5M1.500 9L5 12.500 8.500 9"/></svg>
    </footer>
  </section>
  <div class="edge"></div>
  <div class="shadow-mode">Shadow Mode</div>

  <footer class="taskbar">
    <div class="pinned">
      <b><svg viewBox="0 0 16 16" width="16" height="16"><path fill="#fff" d="M0 2.200l6.800-1v6.300H0zM7.600 1.100L16 0v7.500H7.600zM0 8.300h6.800v6.500L0 13.800zM7.600 8.300H16V16l-8.400-1.200z"/></svg></b>
      <b><svg width="17" height="17"><use href="#ie"/></svg></b>
      <b><svg width="16" height="16"><use href="#chrome"/></svg></b>
      <b class="run"><svg viewBox="0 0 17 14" width="17" height="14"><path fill="#f8d775" d="M0 0h6l1 2h9.500v11H0z"/><path fill="#fdeaa8" d="M0 4h17v9H0z"/><path fill="#3aa5dc" d="M3 7h11v7h-3v-3H6v3H3z"/></svg></b>
      <b class="run"><svg width="18" height="18"><use href="#excel"/></svg></b>
      <b class="run act"><svg width="17" height="17"><use href="#xm"/></svg></b>
      <b class="run"><svg width="16" height="16"><use href="#vsc"/></svg></b>
    </div>
    <div class="tray">
      <svg class="t" viewBox="0 0 48 48"><use href="#clover"/></svg>
      <svg class="t" viewBox="0 0 16 16"><rect width="16" height="16" rx="3" fill="#3f92e0"/><path fill="#fff" d="M3 3.500q3 .5 5-1 2 1.500 5 1 0 8-5 10.500Q3 11.500 3 3.500z"/><path fill="none" stroke="#3f92e0" stroke-width="1.300" d="M10 6H7q-1 1.500 1 2t1 2H6"/></svg>
      <svg class="t" viewBox="0 0 16 16"><path fill="#111a10" d="M0 0h16v16H0z"/><path fill="#76b900" opacity=".6" d="M8 4h5v8H8z"/><path fill="none" stroke="#76b900" opacity=".8" d="M3 8q4.500-5 9 0-4.500 4.500-9 0z"/><circle cx="7.500" cy="8" r="1.600" fill="#111a10"/></svg>
      <svg class="t" viewBox="0 0 16 16"><path class="w" d="M10.500 3.500v-2h-9v10h2M4.500 4.500h10v10h-10z"/></svg>
      <svg class="t" viewBox="0 0 16 16"><path class="w" d="M5.500.5h5v4h-5zM4.500 4.500h7v7l-2 3.500h-5zM9 12l2 2 3-4"/><path class="w" d="M7 2v1M9 2v1"/></svg>
      <svg class="t" viewBox="0 0 16 16"><path class="w" d="M5 2.500h10.500v8H5M.5 2.500h4v4h-4zM2.500 6.500v8h6"/><path fill="#f7c325" d="M11.500 7l4.500 9H7z"/><path stroke="#222" d="M11.500 10v3"/></svg>
      <svg class="t" viewBox="0 0 16 16"><path class="w" d="M.5 5.500h2l4-4v13l-4-4h-2zM8.500 5q2 3 0 6M11 3.500q3 4.500 0 9M13.300 2q4 6 0 12"/></svg>
      <span class="en">英</span><span class="py">拼</span><span class="ck">14:29:37</span>
      <svg class="nt" viewBox="0 0 18 18"><path class="w" d="M1.500 2.500h15v11H11l-2 3-2-3H1.500z"/></svg>
    </div>
  </footer>
  <svg class="cursor" viewBox="0 0 12 19" width="12" height="19"><path fill="#fff" stroke="#111" d="M.6.8v15l3.600-3.400 2.400 5.600 2.400-1L6.600 11.500h4.800z"/></svg>
</div>
</body>
</html>
```
FILE: styles.css
```
* { box-sizing: border-box; margin: 0; padding: 0; }
body { width: 1920px; height: 1080px; overflow: hidden; font: 12px/17px "Noto Sans", "Noto Sans CJK SC", sans-serif; color: #1b1b1b; background: #011733; }
.defs { position: absolute; }
svg { display: block; flex: none; }
i, em { font-style: normal; }
.desktop { position: relative; width: 1920px; height: 1080px; overflow: hidden; display: flex; flex-direction: column; justify-content: space-between; }
.wall { position: absolute; left: 0; top: 0; width: 1920px; height: 1080px; }

.apps { position: relative; display: grid; grid-auto-flow: column; grid-template-rows: repeat(10, 102px); grid-auto-columns: 76px; width: 304px; }
.app { padding-top: 7px; display: flex; flex-direction: column; align-items: center; color: #fff; text-align: center; white-space: nowrap; letter-spacing: .15px; text-shadow: 0 1px 2px #000, 1px 1px 1px #000; }
.app > svg { width: 48px; height: 48px; }
.app text { text-shadow: none; letter-spacing: 0; }
.app span { margin-top: 3px; }
.ad { font-size: 24px; font-weight: 600; }
.pp { font: 700 10.5px "Liberation Sans", sans-serif; }

/* file explorer window */
.explorer { position: absolute; left: 636px; top: 69px; width: 325px; height: 728px; background: #fff; display: flex; flex-direction: column; overflow: hidden; }
.ex-title { height: 30px; display: flex; align-items: center; padding-left: 10px; color: #8a8a8a; font-size: 13px; }
.ex-title i { width: 1px; height: 12px; background: #999; margin: 0 11px 0 7px; }
.ex-title .chk { margin: 0 9px 0 -1px; }
.ex-title .dd { margin: 2px 0 0 7px; }
.ex-title .dd + i { margin: 0 7px; }
.ex-tabs { height: 27px; display: flex; border-bottom: 1px solid #dadbdc; flex: none; }
.ex-tabs b { width: 53px; height: 26px; line-height: 25px; font-weight: 400; text-align: center; color: #333; }
.ex-tabs b:first-child { width: 56px; height: 23px; background: #0462b1; color: #fff; line-height: 24px; }
.ex-tabs b.on { width: 52px; height: 27px; background: #f3f4f5; border: 1px solid #dadbdc; border-bottom: 0; }
.ex-tabs b.on + b { width: 54px; }
.ribbon { height: 107px; flex: none; background: #f3f4f5; border-bottom: 1px solid #dadbdc; display: flex; color: #333; white-space: nowrap; }
.rb { display: flex; flex-direction: column; align-items: center; text-align: center; flex: none; }
.rb span { line-height: 17px; margin-top: 5px; }
.rb1 { width: 64px; padding-top: 13px; }
.rb1 span { margin-top: 8px; }
.rb2 { width: 31px; padding-top: 9px; }
.rb3 { width: 54px; padding-top: 9px; }
.rb3 em { color: #666; margin-top: 7px; margin-left: 12px; }
.cut { display: flex; gap: 5px; margin: 3px 0 0 14px; line-height: 17px; width: 44px; }
.dim { color: #888; }
.rb4 { width: 106px; padding: 6px 0 0 5px; border-right: 1px solid #dcdddf; height: 104px; flex: none; }
.rb4 p { display: flex; align-items: center; gap: 4px; height: 17px; margin-bottom: 5px; }
.rb5 { width: 50px; padding-top: 9px; }
.rb6 { width: 36px; padding-top: 9px; }
s { border: 3px solid transparent; border-top-color: #333; border-bottom: 0; }
.addr { height: 36px; flex: none; display: flex; align-items: flex-start; padding: 5px 0 0 12px; }
.addr > svg { margin: 5px 4px 0 0; }
.path { flex: 1; height: 23px; border: 1px solid #d9d9d9; border-right: 0; display: flex; align-items: center; padding-left: 4px; white-space: nowrap; color: #222; }
.path u { width: 5px; height: 5px; border: solid #777; border-width: 1px 1px 0 0; transform: rotate(45deg); margin: 0 12px 0 8px; flex: none; }
.path u:first-of-type { margin-right: 10px; }
.ex-body { height: 505px; flex: none; display: flex; overflow: hidden; }
.tree { width: 139px; padding-top: 15px; overflow: hidden; white-space: nowrap; }
.tree p { height: 24px; padding-left: 32px; display: flex; align-items: center; gap: 5px; letter-spacing: .15px; }
.tree p > svg { width: 16px; height: 16px; }
.tree .l0 { padding-left: 25px; }
.tree .l0 > svg { width: 15px; }
.tree .root { background: #d9d9d9; margin: 8px 0; padding-left: 24px; gap: 6px; }
.tree p > .pn { width: 10px; height: 10px; margin-left: auto; margin-right: 3px; }
.vbar { width: 16px; margin-left: 1px; background: #f0f0f0; display: flex; flex-direction: column; flex: none; }
.vbar svg { width: 16px; height: 17px; fill: none; stroke: #444; stroke-width: 1.8; }
.vbar div { height: 123px; background: #cdcdcd; }
.dn { margin-top: auto; }
.files { flex: 1; margin-left: 18px; overflow: hidden; white-space: nowrap; }
.files h4 { font-weight: 400; color: #4c607a; height: 33px; padding: 5px 0 0 3px; display: flex; }
.files h4 svg { margin: -4px 0 0 96px; }
.files p { height: 21px; display: flex; align-items: center; gap: 4px; padding-left: 4px; letter-spacing: .2px; }
.files .cj { letter-spacing: 0; }
.files p > svg { width: 16px; height: 16px; }
.files .sel { background: #d9d9d9; }
.ex-foot { flex: 1; padding: 3px 0 0 14px; display: flex; gap: 21px; color: #2d4763; letter-spacing: .15px; }

/* mind map window */
.xmind { position: absolute; left: 960px; top: 0; width: 960px; height: 1050px; border: 1px solid #2f86a8; border-top: 2px solid #33789c; background: #f5f6f6; display: flex; flex-direction: column; box-shadow: 0 0 10px rgba(0, 0, 0, .45); }
.xm-menu { height: 20px; display: flex; align-items: center; padding-left: 16px; font-size: 13px; gap: 16px; color: #333; flex: none; }
.xm-menu .xt { margin-left: 83px; width: 43px; text-align: right; color: #777; margin-right: 289px; }
.xm-menu .trial { width: 115px; height: 18px; line-height: 18px; background: #fa2020; color: #fff; font-size: 11px; text-align: center; white-space: nowrap; flex: none; }
.xm-menu > svg { margin-left: 12px; }
.xm-bar { height: 54px; display: flex; align-items: flex-start; padding: 6px 0 0 16px; flex: none; }
.pills { width: 188px; display: flex; padding-top: 7px; font-size: 14px; line-height: 28px; }
.pills b { font-weight: 400; width: 88px; text-align: center; color: #888; }
.pills b.on { border-radius: 14px; background: #e0e1e1; color: #222; }
.pills b + b { width: 60px; }
.tools { display: flex; margin: -1px 0 0 5px; width: 413px; }
.tl { width: 59px; display: flex; flex-direction: column; align-items: center; font-size: 11px; line-height: 15px; color: #333; }
.tl i { width: 48px; height: 24px; margin-bottom: 3px; background: #fff; box-shadow: 0 1px 2px rgba(0, 0, 0, .25); display: flex; align-items: center; justify-content: center; }
.tl svg { width: 22px; height: 19px; fill: none; stroke: #000; stroke-width: 1.7; }
.tl.off { color: #b3b3b3; }
.tl.off i { background: #f8f9f9; box-shadow: 0 1px 1px rgba(0, 0, 0, .1); }
.tl.off svg { stroke: #8c8c8c; stroke-width: 1.5; }
.zen { margin: -1px 0 0 45px; }
.share { margin: -1px 0 0 21px; }
.pair { display: flex; margin-left: 38px; }
.pair .tl { width: 49px; }
.pair .tl i { width: 49px; height: 25px; border-right: 1px solid #e2e2e2; }
.xm-body { height: 938px; flex: none; display: flex; background: #4fa2b4; overflow: hidden; }
.ln { fill: none; stroke: #cfe6f2; stroke-width: 1.9; }
.map text { font-family: "Lato", "Noto Sans CJK SC", sans-serif; }
.lf { font-size: 14px; font-weight: 500; fill: #fff; }
.nd { font-size: 18px; font-weight: 700; fill: #3a3324; }
.rt { font-size: 28px; font-weight: 700; fill: #363e46; }
.xv { flex: 1; background: #f3f6f7; display: flex; flex-direction: column; }
.xv svg, .xh svg { width: 9px; height: 12px; fill: none; stroke: #999; }
.xv div { margin-top: 385px; height: 303px; background: #d2d6d8; }
.xh { height: 11px; flex: none; background: #f3f6f7; border-bottom: 1px solid #ddd; display: flex; align-items: center; padding: 0 10px 0 4px; }
.xh div { width: 340px; height: 10px; margin-left: 300px; background: #d2d6d8; }
.rg { margin-left: auto; }
.xm-foot { flex: 1; background: #fff; display: flex; align-items: center; justify-content: flex-end; padding-right: 10px; font-size: 13px; color: #222; }
.xm-foot span { margin-right: 9px; }
.mp { width: 35px; height: 23px; border: solid #ddd; border-width: 0 1px; display: flex; align-items: center; justify-content: center; }
.xm-foot > svg + svg { margin-left: -4px; }
.edge { position: absolute; left: 710px; top: 0; width: 470px; height: 2px; background: #a9aeb2; border-radius: 0 0 2px 2px; }
.shadow-mode { position: absolute; left: 1209px; top: 1px; width: 137px; height: 24px; border: 1px solid #4d6a66; border-radius: 4px; background: linear-gradient(90deg, #f2f2f2, #c4c8c6 30%, #e0e2e1 45%, #bec2c0 60%, #eaeaea 90%); font: 18px/23px "Liberation Sans", sans-serif; color: #2320c4; text-align: center; }

/* taskbar */
.taskbar { position: absolute; left: 0; bottom: 0; width: 1920px; height: 30px; background: #04090f; display: flex; justify-content: space-between; }
.pinned { display: flex; }
.pinned b { width: 37px; display: flex; align-items: center; justify-content: center; position: relative; }
.pinned b:first-child { width: 36px; }
.pinned b:nth-child(2) { margin-left: 2px; }
.run::after { content: ""; position: absolute; left: 5px; right: 4px; bottom: 0; height: 2px; background: #76b0dc; }
.pinned .act { background: #4b5157; width: 36px; }
.pinned .act::after { left: 0; right: 0; }
.pinned .act svg { margin-top: -1px; }
.tray { display: flex; align-items: center; color: #fff; padding-right: 24px; }
.t { width: 16px; height: 16px; margin-right: 8px; }
.w { fill: none; stroke: #fff; stroke-width: 1.1; }
.en { font-size: 14px; width: 18px; margin-right: 11px; }
.py { font-size: 13px; line-height: 15px; width: 14px; height: 15px; background: #fff; color: #000; margin-right: 18px; }
.ck { width: 66px; font-size: 12px; letter-spacing: -.1px; }
.nt { width: 18px; height: 18px; }
.cursor { position: absolute; left: 195px; top: 1061px; }
.taskbar::after { content: ""; position: absolute; right: 4px; top: 0; width: 1px; height: 30px; background: #3b4046; }
```
